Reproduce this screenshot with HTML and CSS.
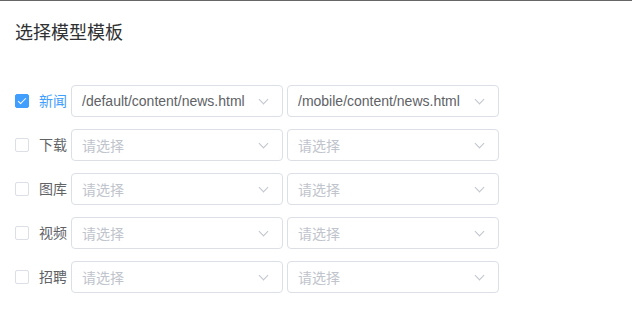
FILE: index.html
```html
<!doctype html>
<html>

<head>
    <meta charset="utf-8" />
    <title>选择模型模板</title>
    <link rel="stylesheet" href="styles.css">
</head>

<body>
    <div id="wrap">
        <h3 class="title">选择模型模板</h3>
        <ul class="rows">
            <li class="row">
                <label class="check checked"><span class="box"></span><span class="text">新闻</span></label>
                <div class="select"><span class="value">/default/content/news.html</span><i class="arrow"></i></div>
                <div class="select"><span class="value">/mobile/content/news.html</span><i class="arrow"></i></div>
            </li>
            <li class="row">
                <label class="check"><span class="box"></span><span class="text">下载</span></label>
                <div class="select"><span class="placeholder">请选择</span><i class="arrow"></i></div>
                <div class="select"><span class="placeholder">请选择</span><i class="arrow"></i></div>
            </li>
            <li class="row">
                <label class="check"><span class="box"></span><span class="text">图库</span></label>
                <div class="select"><span class="placeholder">请选择</span><i class="arrow"></i></div>
                <div class="select"><span class="placeholder">请选择</span><i class="arrow"></i></div>
            </li>
            <li class="row">
                <label class="check"><span class="box"></span><span class="text">视频</span></label>
                <div class="select"><span class="placeholder">请选择</span><i class="arrow"></i></div>
                <div class="select"><span class="placeholder">请选择</span><i class="arrow"></i></div>
            </li>
            <li class="row">
                <label class="check"><span class="box"></span><span class="text">招聘</span></label>
                <div class="select"><span class="placeholder">请选择</span><i class="arrow"></i></div>
                <div class="select"><span class="placeholder">请选择</span><i class="arrow"></i></div>
            </li>
        </ul>
    </div>
</body>

</html>
```

FILE: styles.css
```css
* {
    margin: 0;
    padding: 0;
    box-sizing: border-box;
}

ul,
li {
    list-style: none;
}

html,
body {
    height: 100%;
    overflow: hidden;
    background: #fff;
    font-family: "Liberation Sans", "Noto Sans CJK SC", sans-serif;
}

#wrap {
    height: 100%;
    border-top: 1px solid #666;
    padding: 20px 15px 0;
}

#wrap .title {
    font-size: 18px;
    font-weight: normal;
    line-height: 24px;
    color: #303133;
}

#wrap .rows {
    margin-top: 40px;
    display: flex;
    flex-direction: column;
    gap: 12px;
}

#wrap .row {
    display: flex;
    align-items: center;
    height: 32px;
}

/* 复选框 */
#wrap .check {
    display: flex;
    align-items: center;
    font-size: 14px;
    color: #606266;
    margin-right: 4px;
}

#wrap .check .box {
    width: 14px;
    height: 14px;
    border: 1px solid #dcdfe6;
    border-radius: 2px;
    background: #fff;
    position: relative;
}

#wrap .check .text {
    padding-left: 10px;
    line-height: 20px;
}

#wrap .check.checked .text {
    color: #409eff;
}

#wrap .check.checked .box {
    background: #409eff;
    border-color: #409eff;
}

#wrap .check.checked .box::after {
    content: "";
    position: absolute;
    left: 4px;
    top: 1px;
    width: 3px;
    height: 7px;
    border: 1px solid #fff;
    border-left: 0;
    border-top: 0;
    transform: rotate(45deg);
}

/* 下拉框 */
#wrap .select {
    width: 212px;
    height: 32px;
    border: 1px solid #dcdfe6;
    border-radius: 4px;
    padding: 0 30px 0 10px;
    display: flex;
    align-items: center;
    position: relative;
    font-size: 14px;
    color: #606266;
}

#wrap .select + .select {
    margin-left: 4px;
}

#wrap .select .placeholder {
    color: #c0c4cc;
}

#wrap .select .arrow {
    position: absolute;
    right: 15px;
    top: 10px;
    width: 7px;
    height: 7px;
    border-right: 1px solid #c0c4cc;
    border-bottom: 1px solid #c0c4cc;
    transform: rotate(45deg);
}
```
